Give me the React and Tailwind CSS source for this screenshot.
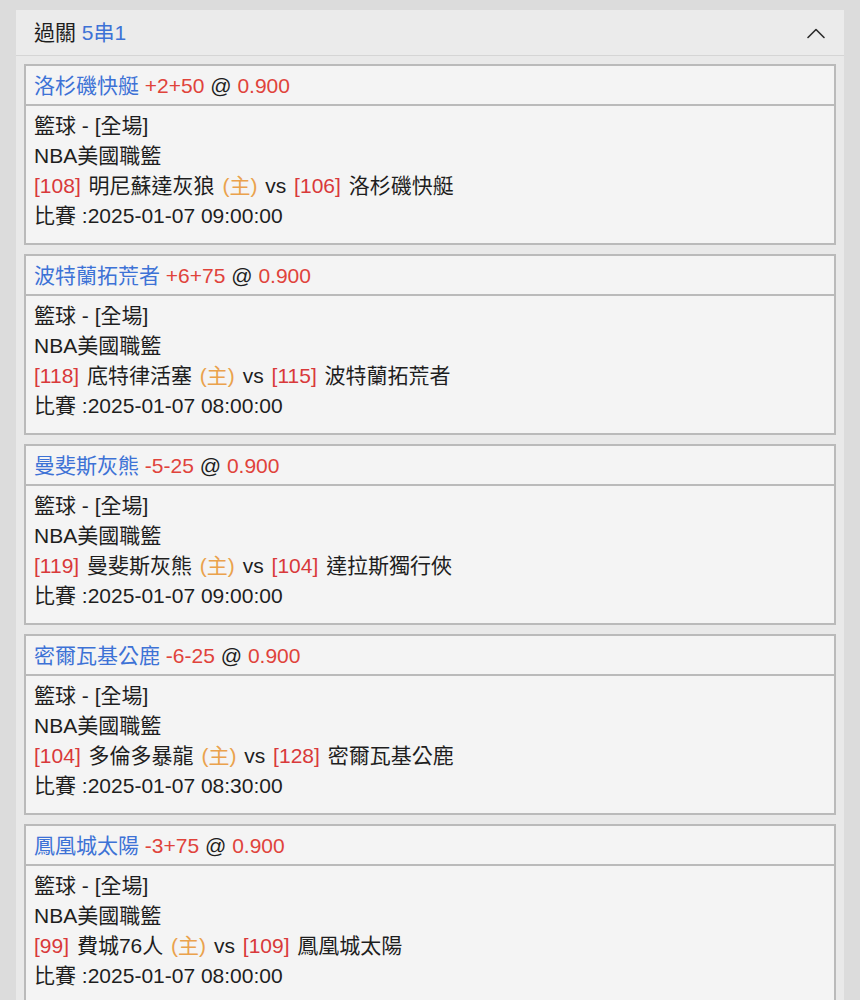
import React from "react";

const bets = [
  {
    pick: "洛杉磯快艇",
    line: "+2+50",
    odds: "0.900",
    home: { no: "108", name: "明尼蘇達灰狼" },
    away: { no: "106", name: "洛杉磯快艇" },
    time: "2025-01-07 09:00:00",
  },
  {
    pick: "波特蘭拓荒者",
    line: "+6+75",
    odds: "0.900",
    home: { no: "118", name: "底特律活塞" },
    away: { no: "115", name: "波特蘭拓荒者" },
    time: "2025-01-07 08:00:00",
  },
  {
    pick: "曼斐斯灰熊",
    line: "-5-25",
    odds: "0.900",
    home: { no: "119", name: "曼斐斯灰熊" },
    away: { no: "104", name: "達拉斯獨行俠" },
    time: "2025-01-07 09:00:00",
  },
  {
    pick: "密爾瓦基公鹿",
    line: "-6-25",
    odds: "0.900",
    home: { no: "104", name: "多倫多暴龍" },
    away: { no: "128", name: "密爾瓦基公鹿" },
    time: "2025-01-07 08:30:00",
  },
  {
    pick: "鳳凰城太陽",
    line: "-3+75",
    odds: "0.900",
    home: { no: "99", name: "費城76人" },
    away: { no: "109", name: "鳳凰城太陽" },
    time: "2025-01-07 08:00:00",
  },
];

const BetCard = ({ bet }) => (
  <div className="border-2 border-[#bababa] bg-[#f4f4f4]">
    {/* Pick */}
    <div className="h-[40px] leading-[40px] px-2 border-b-2 border-[#bababa]">
      <span className="text-[#3d72d6]">{bet.pick}</span>{" "}
      <span className="text-[#e0433b]">{bet.line}</span> @{" "}
      <span className="text-[#e0433b]">{bet.odds}</span>
    </div>

    {/* Details */}
    <div className="px-2 pt-[5px] pb-[12px] leading-[30px]">
      <div>籃球 - [全場]</div>
      <div>NBA美國職籃</div>
      <div className="[word-spacing:2px]">
        <span className="text-[#d9393a]">[{bet.home.no}]</span> {bet.home.name}{" "}
        <span className="text-[#eaa24c]">(主)</span> vs{" "}
        <span className="text-[#d9393a]">[{bet.away.no}]</span> {bet.away.name}
      </div>
      <div>比賽 :{bet.time}</div>
    </div>
  </div>
);

export default function App() {
  return (
    <div
      className="min-h-screen bg-[#dcdcdc] px-4 pt-[10px] text-[21px] text-[#1e1e1e]"
      style={{ fontFamily: '"Liberation Sans", "Noto Sans CJK TC", sans-serif' }}
    >
      <div className="bg-[#e9e9e9] min-h-[990px]">
        {/* Header */}
        <div className="h-[46px] pl-[18px] pr-[18px] flex items-center justify-between bg-[#ebebeb] border-b border-[#d5d5d5]">
          <div>
            過關 <span className="text-[#3d72d6]">5串1</span>
          </div>
          <svg width="20" height="12" viewBox="0 0 20 12" fill="none">
            <polyline
              points="2,10.5 10,2.5 18,10.5"
              stroke="#2a2a2a"
              strokeWidth="1.6"
              strokeLinecap="round"
              strokeLinejoin="round"
            />
          </svg>
        </div>

        {/* Bets */}
        <div className="px-2 pt-2 flex flex-col gap-[9px]">
          {bets.map((bet, i) => (
            <BetCard key={i} bet={bet} />
          ))}
        </div>
      </div>
    </div>
  );
}
